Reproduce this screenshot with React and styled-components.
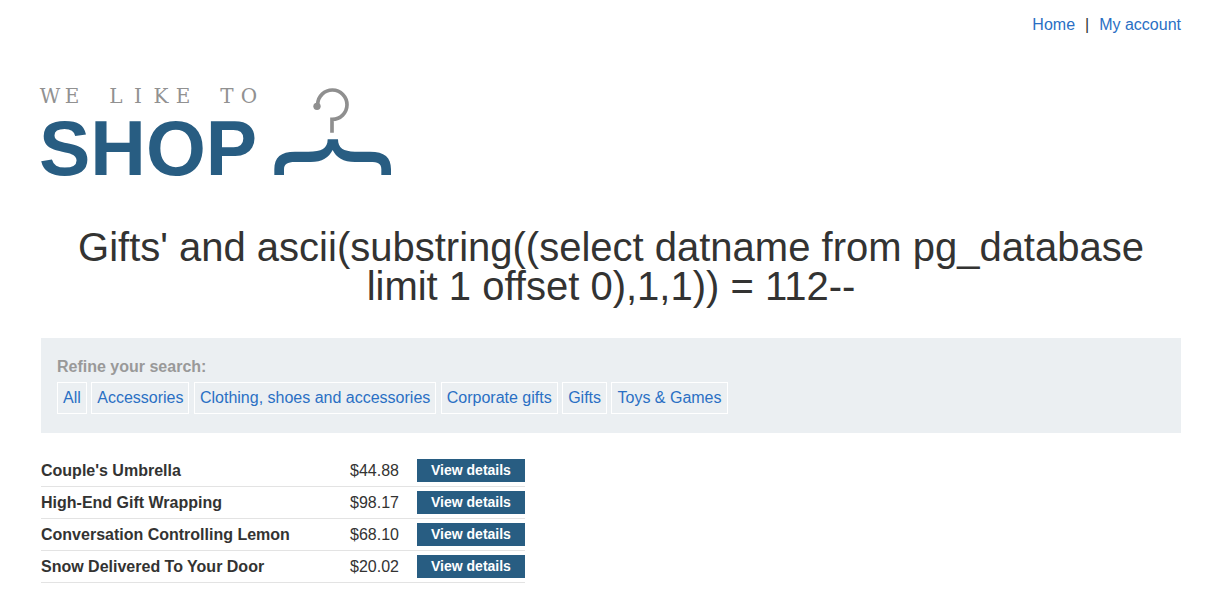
import React from "react";
import styled, { createGlobalStyle } from "styled-components";

const GlobalStyle = createGlobalStyle`
  *, *::before, *::after { box-sizing: border-box; }
  body {
    margin: 0;
    background: #fff;
    color: #333332;
    font-family: "Liberation Sans", Arial, sans-serif;
    font-size: 16px;
    line-height: 20px;
  }
`;

const Page = styled.div`
  padding: 15px 25px 24px 41px;
`;

const TopLinks = styled.nav`
  display: flex;
  justify-content: flex-end;
  gap: 10px;
`;

const Link = styled.a`
  color: #2a6fc4;
  text-decoration: none;
`;

const Logo = styled.svg`
  display: block;
  width: 352px;
  height: 116px;
  margin-top: 45px;
  overflow: visible;
`;

const Title = styled.h1`
  margin: 32px 0;
  font-size: 40px;
  font-weight: 400;
  line-height: 39px;
  text-align: center;
`;

const Filters = styled.section`
  padding: 19px 16px;
  background: #ebeff2;
`;

const FilterLabel = styled.h2`
  margin: 0 0 5px;
  color: #999;
  font-size: 16px;
  line-height: 20px;
`;

const FilterLink = styled(Link)`
  display: inline-block;
  padding: 5px;
  border: 1px solid #fff;
  vertical-align: top;
`;

const Products = styled.table`
  margin-top: 22px;
  border-collapse: collapse;
`;

const Row = styled.tr`
  border-bottom: 1px solid #e3e3e3;
`;

const NameCell = styled.th`
  width: 309px;
  padding: 0;
  text-align: left;
`;

const PriceCell = styled.td`
  width: 67px;
  padding: 0;
`;

const ActionCell = styled.td`
  padding: 4px 0;
`;

const DetailsButton = styled.button`
  display: block;
  padding: 0 14px;
  border: 0;
  background: #285d82;
  color: #fff;
  font-family: inherit;
  font-size: 14px;
  font-weight: 700;
  line-height: 23px;
  cursor: pointer;
`;

const categories = [
  "All",
  "Accessories",
  "Clothing, shoes and accessories",
  "Corporate gifts",
  "Gifts",
  "Toys & Games",
];

const products = [
  ["Couple's Umbrella", "$44.88"],
  ["High-End Gift Wrapping", "$98.17"],
  ["Conversation Controlling Lemon", "$68.10"],
  ["Snow Delivered To Your Door", "$20.02"],
];

function ShopLogo() {
  return (
    <Logo viewBox="41 80 352 116" role="img" aria-label="We like to shop">
      <text
        x="50 72 94 116 138 161 183 205 227 249"
        y="103"
        textAnchor="middle"
        fontFamily='"DejaVu Serif", serif'
        fontSize="20"
        fill="#919191"
      >
        WE LIKE TO
      </text>
      <text
        x="39"
        y="175"
        fontFamily='"Liberation Sans", Arial, sans-serif'
        fontSize="77"
        fontWeight="700"
        fill="#285d82"
      >
        SHOP
      </text>
      <svg x="260" y="80" width="150" height="110" viewBox="0 0 450 330">
        <path
          d="M173 79 V73 A44 44 0 1 1 217 118 H216 V158"
          fill="none"
          stroke="#8f8f8f"
          strokeWidth="11"
        />
        <circle cx="171" cy="79" r="11" fill="#8f8f8f" />
        <path
          d="M43 285 V268 C43 232 62 215 105 215 H145 C185 215 203 206 203 178 H234 C234 204 250 215 285 215 H330 C374 215 393 232 393 268 V285 H364 V268 C364 251 354 246 330 246 H285 C250 246 228 232 218 210 C207 232 187 246 152 246 H105 C82 246 72 252 72 268 V285 Z"
          fill="#285d82"
        />
      </svg>
    </Logo>
  );
}

export default function App() {
  return (
    <>
      <GlobalStyle />
      <Page>
        <TopLinks>
          <Link href="#home">Home</Link>
          <span>|</span>
          <Link href="#account">My account</Link>
        </TopLinks>
        <ShopLogo />
        <main>
          <Title>
            Gifts' and ascii(substring((select datname from pg_database limit 1
            offset 0),1,1)) = 112--
          </Title>
          <Filters>
            <FilterLabel>Refine your search:</FilterLabel>
            {categories.map((category) => (
              <React.Fragment key={category}>
                <FilterLink href="#filter">{category}</FilterLink>{" "}
              </React.Fragment>
            ))}
          </Filters>
          <Products>
            <tbody>
              {products.map(([name, price]) => (
                <Row key={name}>
                  <NameCell scope="row">{name}</NameCell>
                  <PriceCell>{price}</PriceCell>
                  <ActionCell>
                    <DetailsButton type="button">View details</DetailsButton>
                  </ActionCell>
                </Row>
              ))}
            </tbody>
          </Products>
        </main>
      </Page>
    </>
  );
}
